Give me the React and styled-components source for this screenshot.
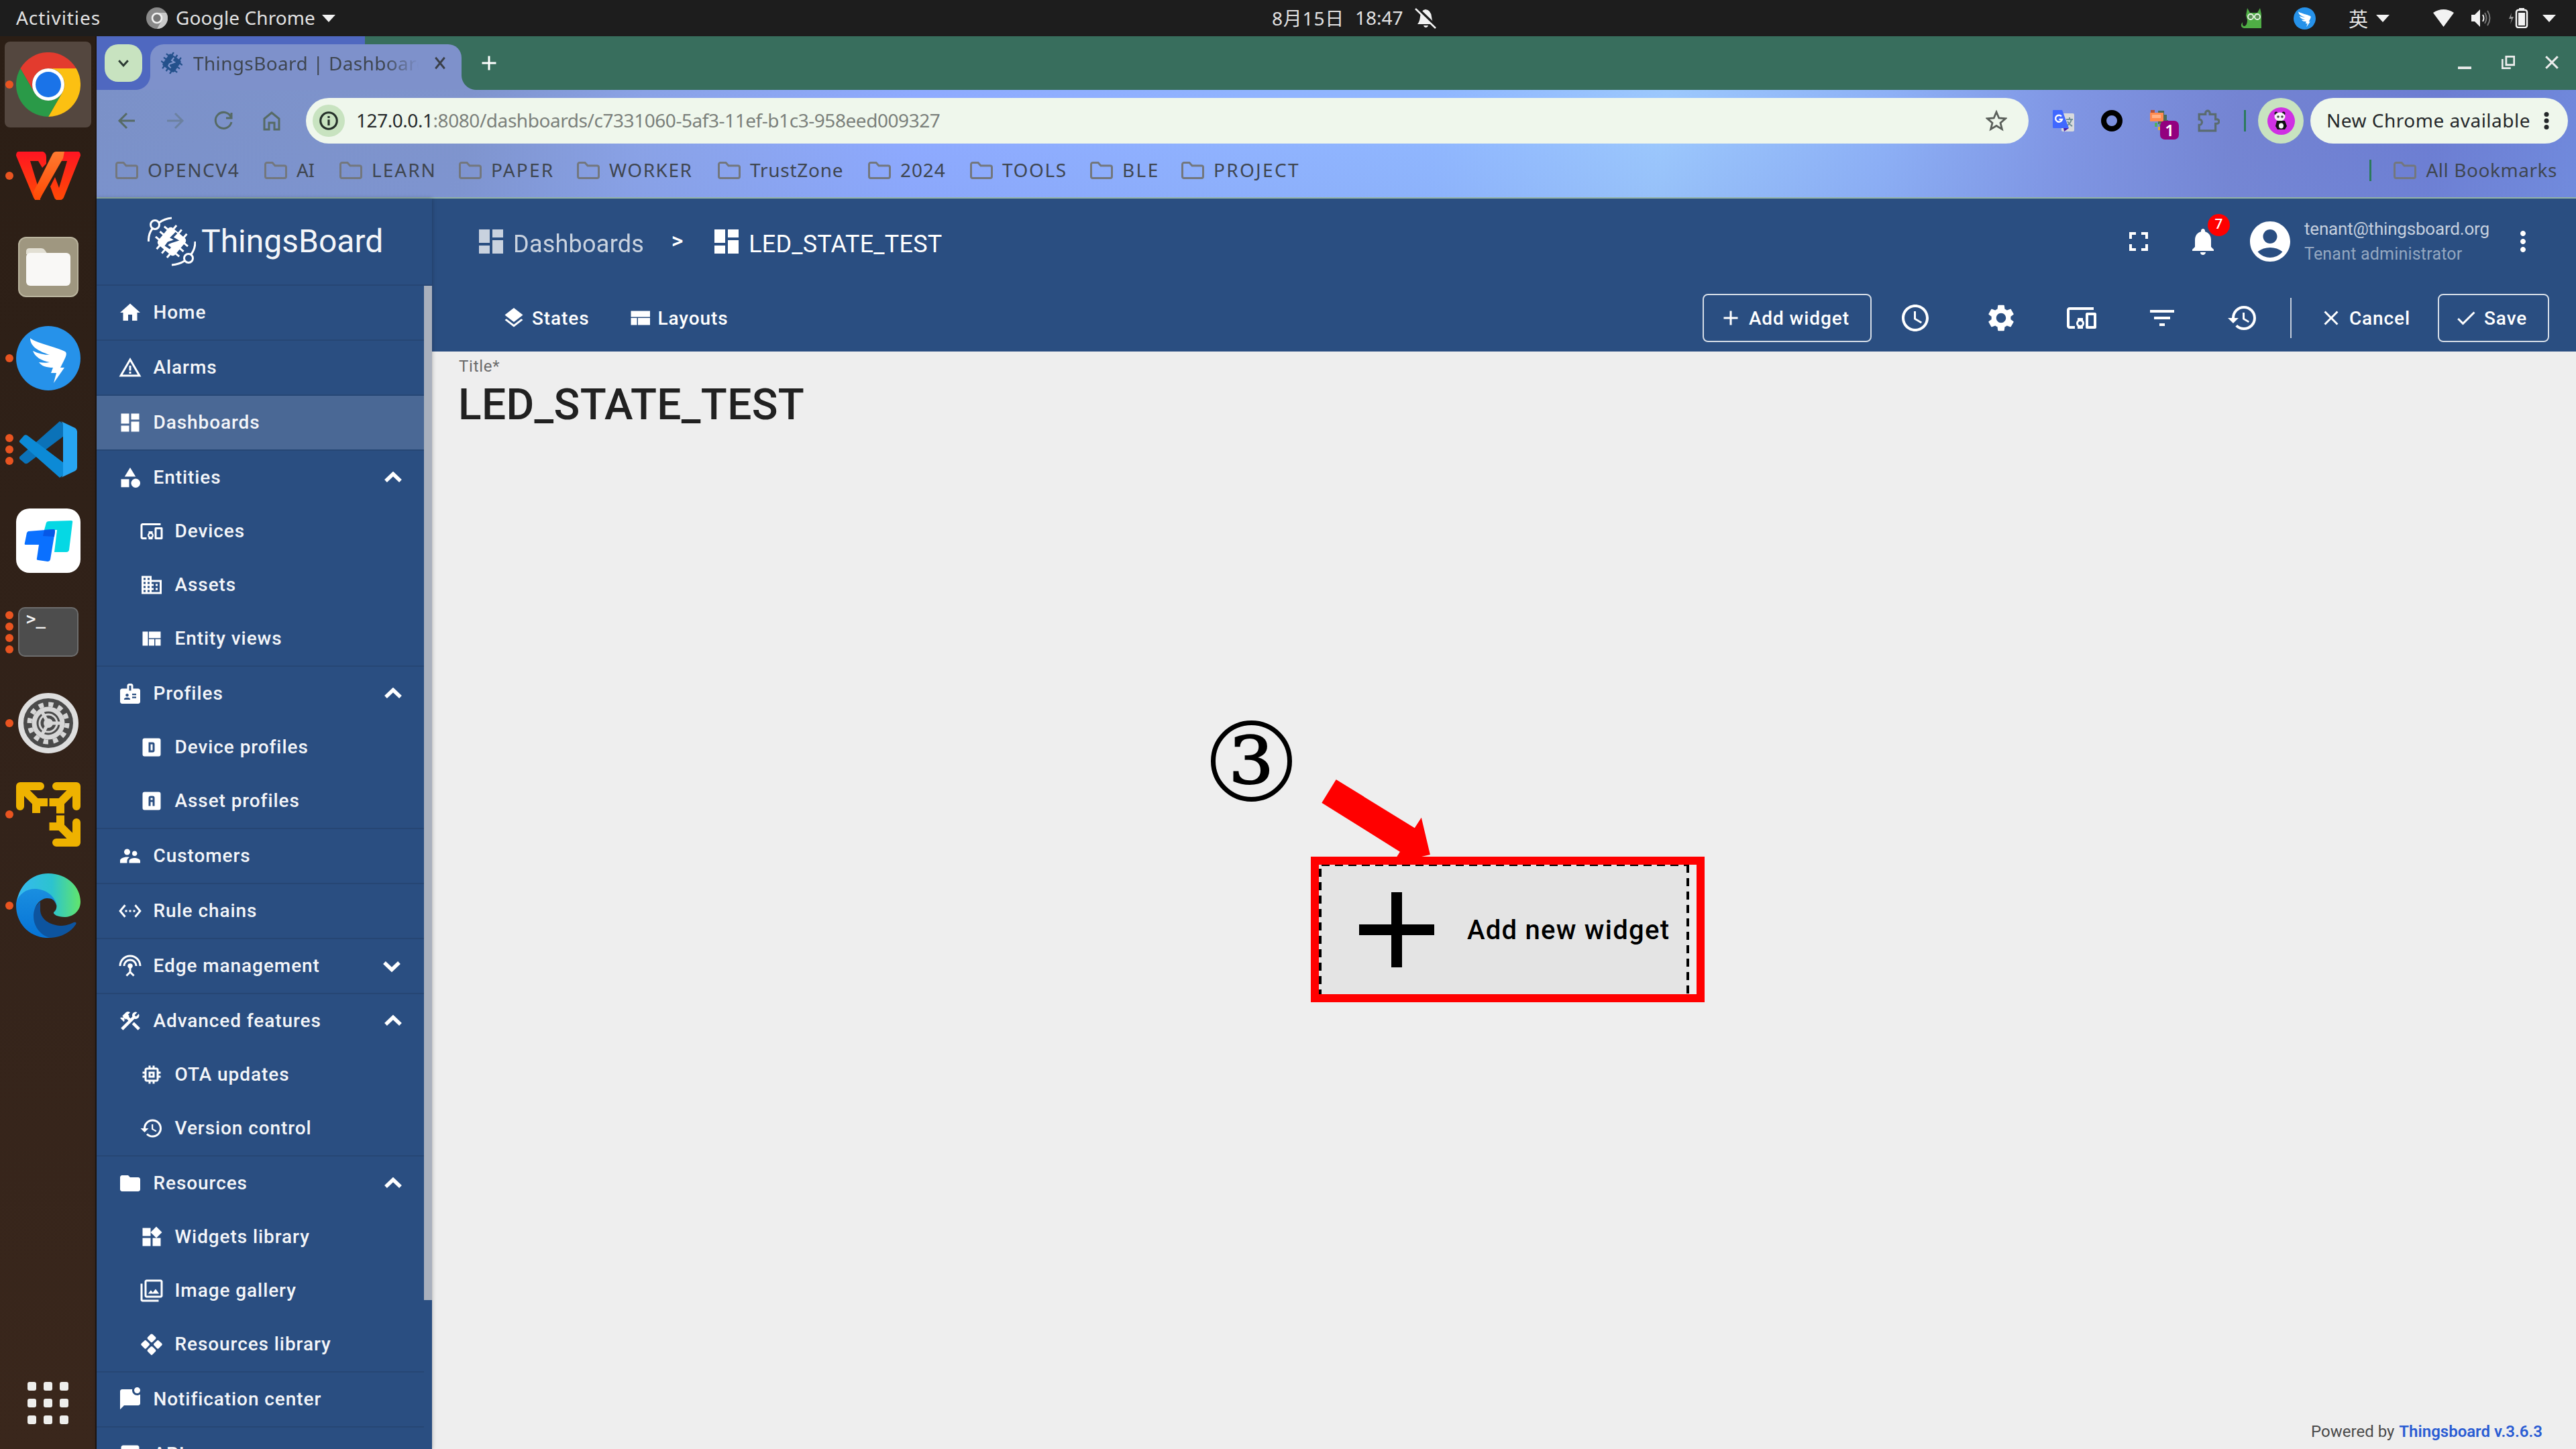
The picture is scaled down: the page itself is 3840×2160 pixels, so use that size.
import React from "react";
import styled, { createGlobalStyle, css } from "styled-components";
import {
  MdHome, MdWarningAmber, MdDashboard, MdCategory, MdDevicesOther, MdDomain, MdBadge,
  MdSupervisorAccount, MdSettingsEthernet, MdSettingsInputAntenna, MdConstruction, MdMemory,
  MdHistory, MdFolder, MdWidgets, MdFilter, MdInsertChart, MdLayers, MdFullscreen,
  MdNotifications, MdAccountCircle, MdMoreVert, MdSchedule, MdSettings, MdFilterList,
  MdAdd, MdClose, MdCheck,
} from "react-icons/md";

const UI = "'Noto Sans', 'Noto Sans CJK SC', sans-serif";
const APP = "Roboto, 'Liberation Sans', sans-serif";
const BLUE = "#2a4e81";
const MINT = "#eff7ec";
const MINT_DARK = "#c8e3c0";

const Global = createGlobalStyle`
  * { box-sizing: border-box; }
  body { margin: 0; background: #1d1d1d; overflow: hidden; }
  svg { display: block; flex: none; }
`;

/* ---------- desktop ---------- */

const Screen = styled.div`
  position: relative;
  width: 3840px;
  height: 2160px;
  overflow: hidden;
  display: flex;
  flex-direction: column;
  font-family: ${UI};
  font-size: 28px;
`;

const Label = styled.span`
  flex: none;
  width: ${(p) => (p.$w ? `${p.$w}px` : "auto")};
  padding-bottom: 2px;
  letter-spacing: ${(p) => p.$ls || 0}px;
  white-space: nowrap;
`;

const TopBar = styled.header`
  height: 54px;
  flex: none;
  display: grid;
  grid-template-columns: 1896px 1fr auto;
  align-items: center;
  background: #1d1d1d;
  color: #e2e2e2;
`;

const TopLeft = styled.div`
  display: flex;
  align-items: center;
  padding-left: 24px;
`;

const AppMenu = styled.div`
  display: flex;
  align-items: center;
  margin-left: 69px;
  gap: 12px;
`;

const Clock = styled.div`
  display: flex;
  align-items: center;
  gap: 20px;
`;

const Tray = styled.div`
  display: flex;
  align-items: center;
  padding-right: 30px;
`;

const TrayItem = styled.div`
  display: flex;
  align-items: center;
  gap: 12px;
  font-size: 29px;
  margin-right: ${(p) => p.$gap || 0}px;
`;

const Caret = styled.i`
  border: 10px solid transparent;
  border-top: 11px solid #f2f2f2;
  border-bottom: 0;
`;

const Workspace = styled.div`
  flex: 1;
  min-height: 0;
  display: flex;
`;

const Dock = styled.nav`
  width: 144px;
  flex: none;
  display: flex;
  flex-direction: column;
  justify-content: space-between;
  padding-top: 4px;
  background: linear-gradient(180deg, #2b1e15, #33231a 55%, #3a271c);
  border-right: 2px solid #1f1712;
`;

const DockList = styled.div`
  display: flex;
  flex-direction: column;
`;

const DockSlot = styled.div`
  position: relative;
  height: 136px;
  display: flex;
  align-items: center;
  justify-content: center;
  padding-left: 2px;
  ${(p) => p.$active && css`
    &::before {
      content: "";
      position: absolute;
      inset: 4px 6px 4px 7px;
      border-radius: 8px;
      background: #54473f;
    }
  `}
  svg { position: relative; }
`;

const Dots = styled.div`
  position: absolute;
  left: 8px;
  top: 0;
  bottom: 0;
  display: flex;
  flex-direction: column;
  justify-content: center;
  gap: 5px;
`;

const Dot = styled.i`
  width: 12px;
  height: 12px;
  border-radius: 50%;
  background: #e95420;
`;

const AppGrid = styled.div`
  display: grid;
  grid-template-columns: repeat(3, 13px);
  gap: 12px 11px;
  padding: 0 0 37px 41px;
`;

const GridDot = styled.i`
  height: 13px;
  border-radius: 3px;
  background: #eeeeec;
`;

/* ---------- browser ---------- */

const Browser = styled.section`
  flex: 1;
  min-width: 0;
  display: flex;
  flex-direction: column;
`;

const TabStrip = styled.div`
  height: 80px;
  flex: none;
  display: flex;
  padding: 12px 26px 0 12px;
  background: linear-gradient(90deg, #4f68c0 400px, #386e5d 400px);
  color: #ffffff;
`;

const TabSearch = styled.div`
  width: 56px;
  height: 56px;
  border-radius: 20px;
  background: ${MINT_DARK};
  display: flex;
  align-items: center;
  justify-content: center;
`;

const Tab = styled.div`
  position: relative;
  width: 464px;
  height: 68px;
  margin-left: 12px;
  padding: 0 20px 12px 16px;
  display: flex;
  align-items: center;
  gap: 16px;
  border-radius: 20px 20px 0 0;
  background: #7e91cb;
  color: #3f4650;
  &::before, &::after {
    content: "";
    position: absolute;
    bottom: 0;
    width: 22px;
    height: 22px;
  }
  &::before {
    left: -22px;
    background: radial-gradient(circle at 0 0, transparent 21.5px, #7e91cb 22.5px);
  }
  &::after {
    right: -22px;
    background: radial-gradient(circle at 100% 0, transparent 21.5px, #7e91cb 22.5px);
  }
`;

const TabTitle = styled.span`
  flex: 1;
  overflow: hidden;
  padding-bottom: 1px;
  white-space: nowrap;
  letter-spacing: 0.35px;
  mask-image: linear-gradient(90deg, #000 84%, transparent 99%);
`;

const NewTab = styled.div`
  margin: 16px 0 0 29px;
`;

const WindowButtons = styled.div`
  display: flex;
  gap: 45px;
  margin: 17px 0 0 auto;
`;

const Chrome = styled.div`
  height: 160px;
  flex: none;
  color: #3f4650;
  background:
    linear-gradient(180deg, rgba(120, 140, 220, 0) 40%, rgba(120, 150, 225, 0.14)),
    linear-gradient(97deg, #7b91c8 0, #7f94cd 15%, #8aa2e6 22%, #8eaaff 33%, #90b3ff 46%, #90b7ff 54%, #9cc8fd 63%, #8db0f6 72%, #8096e4 79%, #7484d2 86%, #6c7dd2 94%, #7089dc 100%);
`;

const Toolbar = styled.div`
  height: 92px;
  display: flex;
  align-items: center;
  padding-left: 9px;
`;

const NavSlot = styled.div`
  width: 72px;
  height: 68px;
  position: relative;
  display: flex;
  align-items: center;
  justify-content: center;
  opacity: ${(p) => (p.$dim ? 0.4 : 1)};
`;

const Omnibox = styled.div`
  width: 2568px;
  height: 68px;
  margin: 0 16px 0 15px;
  padding: 0 32px 0 10px;
  display: flex;
  align-items: center;
  justify-content: space-between;
  border-radius: 34px;
  background: ${MINT};
`;

const Address = styled.div`
  display: flex;
  align-items: center;
  gap: 17px;
`;

const SiteInfo = styled.div`
  width: 48px;
  height: 48px;
  border-radius: 50%;
  background: ${MINT_DARK};
  display: flex;
  align-items: center;
  justify-content: center;
`;

const Url = styled.span`
  padding-bottom: 2px;
  color: #7b807b;
  letter-spacing: -0.45px;
  white-space: nowrap;
`;

const Host = styled.span`
  color: #25282a;
`;

const CountBadge = styled.span`
  position: absolute;
  left: 36px;
  top: 34px;
  width: 28px;
  height: 28px;
  border-radius: 7px;
  background: #93007f;
  color: #fff;
  font-size: 24px;
  font-weight: 600;
  line-height: 28px;
  text-align: center;
`;

const GreenRule = styled.i`
  width: 3px;
  height: 32px;
  background: #2b7a5c;
  margin-left: ${(p) => p.$l || 0}px;
  margin-right: ${(p) => p.$r || 0}px;
`;

const Profile = styled.div`
  width: 68px;
  height: 68px;
  border-radius: 50%;
  background: ${MINT_DARK};
  display: flex;
  align-items: center;
  justify-content: center;
`;

const UpdateChip = styled.div`
  width: 384px;
  height: 68px;
  margin-left: 10px;
  padding: 0 28px 0 24px;
  display: flex;
  align-items: center;
  justify-content: space-between;
  border-radius: 34px;
  background: ${MINT};
  color: #25282a;
`;

const BookmarkBar = styled.div`
  height: 56px;
  display: flex;
  align-items: center;
  padding: 0 28px;
`;

const Bookmark = styled.div`
  width: ${(p) => (p.$w ? `${p.$w}px` : "auto")};
  display: flex;
  align-items: center;
  gap: 14px;
`;

const OtherBookmarks = styled.div`
  display: flex;
  align-items: center;
  margin-left: auto;
`;

const ChromeRule = styled.div`
  height: 2px;
  flex: none;
  background: #93b3a6;
`;

/* ---------- ThingsBoard ---------- */

const Page = styled.div`
  flex: 1;
  min-height: 0;
  display: flex;
  font-family: ${APP};
  background: #eeeeee;
`;

const Sidebar = styled.aside`
  width: 500px;
  flex: none;
  display: flex;
  flex-direction: column;
  background: ${BLUE};
  color: #f4f6f9;
  box-shadow: 0 0 6px rgba(0, 0, 0, 0.3);
  z-index: 1;
`;

const Brand = styled.div`
  height: 130px;
  flex: none;
  padding: 0 0 1px 76px;
  display: flex;
  align-items: center;
  gap: 8px;
  border-bottom: 2px solid #264674;
  font-size: 48px;
`;

const MenuScroll = styled.div`
  flex: 1;
  min-height: 0;
  display: flex;
  overflow: hidden;
`;

const Menu = styled.div`
  width: 488px;
`;

const MenuGroup = styled.div`
  border-bottom: 2px solid #264674;
`;

const MenuRow = styled.div`
  height: 80px;
  padding: 0 33px 0 ${(p) => (p.$sub ? 64 : 32)}px;
  display: flex;
  align-items: center;
  gap: 16.5px;
  font-size: 28px;
  font-weight: 500;
  letter-spacing: 0.92px;
  white-space: nowrap;
  background: ${(p) => (p.$active ? "#4a6895" : "transparent")};
  svg { color: #fff; }
`;

const MenuText = styled.span`
  padding-bottom: 2px;
`;

const Toggle = styled.div`
  margin-left: auto;
  padding-right: ${(p) => (p.$open ? 0 : 2)}px;
  margin-right: -1px;
`;

const ScrollThumb = styled.div`
  width: 12px;
  height: 1512px;
  background: #a9b0bd;
`;

const Main = styled.main`
  flex: 1;
  min-width: 0;
  display: flex;
  flex-direction: column;
`;

const Header = styled.div`
  height: 128px;
  flex: none;
  display: flex;
  align-items: center;
  padding: 0 55px 0 64px;
  background: ${BLUE};
  color: #fff;
`;

const Crumb = styled.div`
  display: flex;
  align-items: center;
  gap: 9px;
  opacity: ${(p) => (p.$parent ? 0.75 : 1)};
  font-size: 36px;
  letter-spacing: ${(p) => (p.$parent ? 0.25 : 0.2)}px;
`;

const CrumbText = styled.span`
  padding-top: 7px;
`;

const CrumbSeparator = styled.span`
  width: 99px;
  text-align: center;
  font-size: 34px;
  font-weight: 500;
  line-height: 40px;
  padding-bottom: 4px;
`;

const HeaderActions = styled.div`
  margin-left: auto;
  display: flex;
  align-items: center;
`;

const HeaderIcon = styled.div`
  position: relative;
  width: 96px;
  display: flex;
  justify-content: center;
`;

const AlertBadge = styled.span`
  position: absolute;
  left: 55px;
  top: -17px;
  width: 33px;
  height: 33px;
  border-radius: 50%;
  background: #ff0000;
  font-size: 21px;
  font-weight: 500;
  line-height: 31px;
  text-align: center;
`;

const Account = styled.div`
  display: flex;
  align-items: center;
  gap: 15px;
  margin: 0 24px 0 16px;
`;

const AccountText = styled.div`
  width: 278px;
  line-height: 38px;
  white-space: nowrap;
`;

const UserEmail = styled.div`
  font-size: 26px;
  letter-spacing: -0.2px;
  color: #c5cfde;
`;

const UserRole = styled.div`
  font-size: 25px;
  letter-spacing: 0.2px;
  color: #94a7c0;
`;

const DashBar = styled.div`
  height: 100px;
  flex: none;
  display: flex;
  align-items: center;
  padding: 0 40px 0 104px;
  background: ${BLUE};
  color: #fff;
  font-size: 28px;
  font-weight: 500;
  letter-spacing: 0.9px;
`;

const TextButton = styled.div`
  display: flex;
  align-items: center;
  gap: 9px;
  margin-left: ${(p) => p.$l || 0}px;
  white-space: nowrap;
`;

const OutlineButton = styled(TextButton)`
  width: ${(p) => p.$w}px;
  height: 72px;
  padding-left: 22px;
  border: 2px solid #d4dce6;
  border-radius: 8px;
`;

const BarActions = styled.div`
  margin-left: auto;
  display: flex;
  align-items: center;
`;

const IconTools = styled.div`
  display: flex;
  gap: 72px;
  margin: 0 47px 0 41px;
  svg:first-child { margin-right: 8px; }
`;

const WhiteRule = styled.i`
  width: 2px;
  height: 60px;
  background: #c3cddb;
`;

const TitleBlock = styled.div`
  height: 124px;
  flex: none;
  padding: 8px 0 0 39px;
`;

const TitleHint = styled.div`
  font-size: 24px;
  line-height: 28px;
  letter-spacing: 0.75px;
  padding-left: 1px;
  color: #6b6b6b;
`;

const Title = styled.div`
  margin-top: 6px;
  font-size: 64px;
  line-height: 76px;
  font-weight: 500;
  letter-spacing: 0.35px;
  color: #212121;
`;

const Board = styled.div`
  flex: 1;
  display: flex;
  align-items: center;
  justify-content: center;
`;

const dashX = "repeating-linear-gradient(90deg, #000 0 12px, transparent 12px 20px)";
const dashY = "repeating-linear-gradient(180deg, #000 0 12px, transparent 12px 20px)";

const AddWidgetCard = styled.div`
  width: 552px;
  height: 199px;
  padding-left: 20px;
  display: flex;
  align-items: center;
  gap: 9px;
  font-size: 40px;
  font-weight: 500;
  letter-spacing: 1.25px;
  color: #000;
  background:
    ${dashX} 4px 0 / 100% 4px no-repeat,
    ${dashX} 4px 100% / 100% 4px no-repeat,
    ${dashY} 0 8px / 4px 100% no-repeat,
    ${dashY} 100% 2px / 4px 100% no-repeat,
    #e4e4e4;
  white-space: nowrap;
`;

const Footer = styled.footer`
  height: 36px;
  flex: none;
  padding-right: 50px;
  display: flex;
  justify-content: flex-end;
  gap: 7px;
  font-size: 24px;
  line-height: 20px;
  color: #4a4a4a;
`;

const VersionLink = styled.span`
  font-weight: 600;
  color: #2a5cd3;
`;

/* ---------- notes drawn over the page ---------- */

const StepNumber = styled.div`
  position: absolute;
  left: 1805px;
  top: 1074px;
  width: 121px;
  height: 121px;
  border: 7px solid #000;
  border-radius: 50%;
  color: #000;
  font-family: "DejaVu Serif", serif;
  font-size: 98px;
  line-height: 106px;
  text-align: center;
  -webkit-text-stroke: 2px #000;
`;

const Digit = styled.span`
  display: inline-block;
  transform: scaleX(1.08);
`;

const Arrow = styled.svg`
  position: absolute;
  left: 1960px;
  top: 1150px;
`;

const Highlight = styled.div`
  position: absolute;
  left: 1954px;
  top: 1277px;
  width: 587px;
  height: 217px;
  border: 12px solid #ff0000;
`;

/* ---------- glyphs ---------- */

const MdiIcon = ({ d, size = 36 }) => (
  <svg width={size} height={size} viewBox="0 0 24 24" fill="currentColor"><path fillRule="evenodd" d={d} /></svg>
);
const viewQuilt = "M3 5h5.33v14H3zM9.33 5H21v6.5H9.33zM9.33 12.5h5.34V19H9.33zM15.67 12.5H21V19h-5.33z";
const viewCompact = "M3 19h6v-7H3v7zm7 0h12v-7H10v7zM3 5v6h19V5H3z";
const boxD = "M9 7h4a2 2 0 0 1 2 2v6a2 2 0 0 1-2 2H9V7m2 2v6h2V9h-2M5 3h14a2 2 0 0 1 2 2v14a2 2 0 0 1-2 2H5a2 2 0 0 1-2-2V5a2 2 0 0 1 2-2z";
const boxA = "M11 7a2 2 0 0 0-2 2v8h2v-4h2v4h2V9a2 2 0 0 0-2-2h-2m0 2h2v2h-2V9M5 3h14a2 2 0 0 1 2 2v14a2 2 0 0 1-2 2H5a2 2 0 0 1-2-2V5a2 2 0 0 1 2-2z";
const rhombusSplit = "M12 1.6a1.4 1.4 0 0 0-1 .4L8 5a1.3 1.3 0 0 0 0 1.6l3.1 3.1a1.3 1.3 0 0 0 1.8 0L16 6.600a1.3 1.3 0 0 0 0-1.700L13 2a1.400 1.400 0 0 0-1-.4zM5.800 7.900a1.300 1.300 0 0 0-.9.4L1.800 11.200a1.300 1.300 0 0 0 0 1.700L4.900 16a1.300 1.300 0 0 0 1.800 0l3-3.100a1.300 1.300 0 0 0 0-1.700l-3-2.900a1.300 1.300 0 0 0-.9-.4zM18.200 7.900a1.300 1.300 0 0 0-.9.4l-3 2.900a1.300 1.300 0 0 0 0 1.700l3 3.100a1.300 1.300 0 0 0 1.800 0l3.100-3.100a1.300 1.300 0 0 0 0-1.700l-3.100-2.900a1.300 1.300 0 0 0-.9-.4zM12 14a1.300 1.300 0 0 0-.9.4L8 17.400A1.300 1.300 0 0 0 8 19l3 3a1.300 1.300 0 0 0 2 0l3-3a1.300 1.300 0 0 0 0-1.600l-3.100-3A1.300 1.300 0 0 0 12 14z";
const chatUnread = "M22 6.980V16c0 1.100-.9 2-2 2H6l-4 4V4c0-1.100.9-2 2-2h10.100c-.06.320-.1.660-.1 1 0 2.760 2.240 5 5 5 1.130 0 2.160-.39 3-1.020zM16 3a3 3 0 1 0 6 0 3 3 0 0 0-6 0z";

const Chevron = ({ open }) => (
  <svg width="28" height="18" viewBox="0 0 28 18" fill="none" stroke="currentColor" strokeWidth="5.5">
    <path d={open ? "M3 14 L14 3.500 L25 14" : "M3 4 L14 14.500 L25 4"} />
  </svg>
);

const ThingsLogo = () => (
  <svg width="72" height="74" viewBox="0 0 72 74" fill="none" stroke="#fff" strokeWidth="3">
    <circle cx="11" cy="12" r="6.500" />
    <circle cx="61" cy="62" r="6.500" />
    <path d="M17 9 Q25 3 36 2 M7 18 Q1 26 1.500 37 M55 66 Q47 71 36 72 M65 56 Q71 48 71 37" />
    <g transform="translate(36 37) rotate(40)">
      <rect x="-16.500" y="-16.500" width="33" height="33" rx="5" fill="#fff" stroke="none" />
      <path d="M-10 -23 V23 M0 -23 V23 M10 -23 V23 M-23 -10 H23 M-23 0 H23 M-23 10 H23" />
    </g>
    <path d="M43 24 L36 31 L43 35 L31 39 L28 43 L34 47" stroke={BLUE} strokeWidth="3.500" />
  </svg>
);

const Favicon = () => (
  <svg width="32" height="34" viewBox="0 0 48 50" fill="none" stroke="#24518c" strokeWidth="3.500">
    <g transform="translate(24 25) rotate(35)">
      <rect x="-16" y="-16" width="32" height="32" rx="5" fill="#24518c" stroke="none" />
      <path d="M-10 -22 V22 M0 -22 V22 M10 -22 V22 M-22 -10 H22 M-22 0 H22 M-22 10 H22" />
    </g>
    <path d="M29 13 L24 19 L30 23 L19 27 L17 31 L22 36" stroke="#8297cd" strokeWidth="3" />
  </svg>
);

const FolderOutline = () => (
  <svg width="34" height="26" viewBox="0 0 34 26" fill="none" stroke="#73777d" strokeWidth="3">
    <path d="M4 1.500 H12 L16 6 H30 A2.500 2.500 0 0 1 32.500 8.500 V22 A2.500 2.500 0 0 1 30 24.500 H4 A2.500 2.500 0 0 1 1.500 22 V4 A2.500 2.500 0 0 1 4 1.500Z" />
  </svg>
);

const Line = ({ size = 32, d, color = "#566a64", sw = 3, fill = "none" }) => (
  <svg width={size} height={size} viewBox="0 0 32 32" fill={fill} stroke={color} strokeWidth={sw}><path d={d} /></svg>
);

const ChromeLogo = ({ size = 96 }) => (
  <svg width={size} height={size} viewBox="0 0 96 96">
    <path fill="#e33b2e" d="M48 24H89.600A48 48 0 0 0 6.400 24L27.200 60A24 24 0 0 1 48 24Z" />
    <path fill="#fcc012" d="M89.600 24A48 48 0 0 1 48 96L68.800 60A24 24 0 0 0 48 24Z" />
    <path fill="#2a9a48" d="M6.400 24A48 48 0 0 0 48 96L68.800 60A24 24 0 0 1 27.200 60Z" />
    <circle cx="48" cy="48" r="24" fill="#fff" />
    <circle cx="48" cy="48" r="19" fill="#1a73e8" />
  </svg>
);

const ChromeMono = () => (
  <svg width="32" height="32" viewBox="0 0 96 96">
    <circle cx="48" cy="48" r="48" fill="#8a8a8a" />
    <path fill="#c9c9c9" d="M89.600 24A48 48 0 0 1 48 96L68.800 60A24 24 0 0 0 48 24Z" />
    <circle cx="48" cy="48" r="25" fill="#f2f2f2" />
    <circle cx="48" cy="48" r="17" fill="#777" />
  </svg>
);

const WpsLogo = () => (
  <svg width="96" height="72" viewBox="0 0 96 72" fill="none" strokeLinejoin="round">
    <defs>
      <linearGradient id="wps" x1="0" y1="0" x2="0" y2="1"><stop offset="0" stopColor="#ff1522" /><stop offset="1" stopColor="#ff4a05" /></linearGradient>
      <linearGradient id="wpsMid" x1="0" y1="0" x2="0" y2="1"><stop offset="0" stopColor="#ff7a30" /><stop offset="1" stopColor="#ff4a05" /></linearGradient>
    </defs>
    <path fill="url(#wps)" d="M3 0H40Q45 2 45 8L45 18L39 24L33 14H21L35 60L36 72H30Q27 72 25 66L0 6Q0 1 3 0Z" />
    <path fill="url(#wps)" d="M66 0H93Q96 1 96 6L72 66Q70 72 66 72H60Q57 70 56 66L51 52L58 38L64 54L76 14H66Z" />
    <path fill="url(#wpsMid)" d="M54 4Q56 0 60 0H72L70 10L38 66Q36 72 32 72H28L26 60Z" />
  </svg>
);

const FilesLogo = () => (
  <svg width="90" height="90" viewBox="0 0 90 90">
    <rect x="1" y="1" width="88" height="88" rx="11" fill="#9f9780" stroke="#b9b39d" strokeWidth="2" />
    <path fill="#e2dfd3" d="M12 22Q12 17 17 17H34Q38 17 40 20L44 26H12Z" />
    <rect x="12" y="24" width="66" height="49" rx="6" fill="#f9f8f6" />
  </svg>
);

const DingLogo = ({ size = 96 }) => (
  <svg width={size} height={size} viewBox="0 0 96 96">
    <circle cx="48" cy="48" r="48" fill="#2692ea" />
    <path fill="#fff" d="M21 18C28 25 60 31 73 38C76 40 75 44 72 50L66 62H72L56 85L60 70H52L55 62C46 62 38 60 34 54C40 55 46 55 50 54C38 52 28 46 25 37C33 41 42 43 50 43C36 38 21 32 21 18Z" />
  </svg>
);

const CodeLogo = () => (
  <svg width="86" height="84" viewBox="0 0 86 84">
    <path fill="#0b72b8" d="M60 0L66 4V22L13 62Q9 65 6 61L0 56V53Z" />
    <path fill="#0c8ad6" d="M0 29L7 21Q10 19 13 22L66 62V80L60 84L0 31Z" />
    <path fill="#27a5f2" d="M62 0L83 10Q86 12 86 15V69Q86 72 83 74L62 84Q65 82 65 78V6Q65 2 62 0Z" />
  </svg>
);

const DeskLogo = () => (
  <svg width="96" height="96" viewBox="0 0 96 96">
    <rect width="96" height="96" rx="20" fill="#fff" />
    <path fill="#05d8e4" d="M45 21Q46 19 49 19L82 18Q85 18 84 21L79 62Q78 65 75 65H57L61 32H42Z" />
    <path fill="#0a70ff" d="M18 34L56 31Q58 31 58 34L51 76Q50 79 47 79L33 77Q30 77 31 74L34 54H14Q12 54 13 51L16 36Z" />
    <path fill="#0757e6" d="M42 32L56 31Q58 31 58 34L57 42L40 41Z" />
  </svg>
);

const TermText = styled.text`
  font: 700 24px "DejaVu Sans Mono", monospace;
  fill: #f1f1f1;
`;

const TerminalLogo = () => (
  <svg width="90" height="74" viewBox="0 0 90 74">
    <rect x="1" y="1" width="88" height="72" rx="9" fill="#4d4d4d" stroke="#6d6d6d" strokeWidth="2" />
    <TermText x="12" y="26">&gt;_</TermText>
  </svg>
);

const GearLogo = () => (
  <svg width="90" height="90" viewBox="-45 -45 90 90" fill="none">
    <circle r="41" fill="#4a4a4a" stroke="#dedede" strokeWidth="8" />
    <circle r="21" stroke="#d6d6d6" strokeWidth="7" />
    <circle r="28" stroke="#d6d6d6" strokeWidth="7" strokeDasharray="7.300 7.360" />
    <circle r="7" fill="#d6d6d6" />
    <path d="M0 0 L20 0 M0 0 L-10 -18 M0 0 L-10 18" stroke="#d6d6d6" strokeWidth="5" />
    <circle r="13" stroke="#d6d6d6" strokeWidth="3" />
  </svg>
);

const VmLogo = () => (
  <svg width="96" height="96" viewBox="0 0 96 96" fill="none" stroke="#eeb200" strokeWidth="12">
    <path strokeLinecap="round" strokeLinejoin="round" d="M6 36V6H36M60 6H90V36M90 60V90H60" />
    <path d="M6 6L30 30M90 6L66 30M90 90L66 66" />
    <path d="M30 46V30H47M49.500 30H66V46.500M66 49.500V66H49.500" />
  </svg>
);

const EdgeLogo = () => (
  <svg width="96" height="96" viewBox="0 0 96 96">
    <defs>
      <linearGradient id="edgeTop"><stop offset="0" stopColor="#35b9f1" /><stop offset="0.550" stopColor="#2cc3cf" /><stop offset="1" stopColor="#62e56b" /></linearGradient>
      <linearGradient id="edgeSide" x1="0" y1="0" x2="0" y2="1"><stop offset="0" stopColor="#1a8fe0" /><stop offset="1" stopColor="#0673d6" /></linearGradient>
    </defs>
    <path fill="#0d549f" d="M36 42C29 48 24 56 24 66C24 82 36 96 52 96C68 95 82 87 89 76C91 73 88 72 86 73C78 77 72 78 66 78C50 77 36 68 36 54Z" />
    <path fill="url(#edgeSide)" d="M0 48C0 30 14 20 30 22C48 23 60 36 60 48C58 40 54 37 46 37C34 38 26 50 26 64C26 80 38 94 52 96C22 98 0 76 0 48Z" />
    <path fill="url(#edgeTop)" d="M1 42C5 17 24 0 48 0C76 0 96 20 96 42C96 57 84 65 72 65C62 65 55 61 56 58C60 55 61 50 60 46C57 32 42 23 28 23C15 23 4 31 1 42Z" />
  </svg>
);

const CatIcon = () => (
  <svg width="33" height="32" viewBox="0 0 33 32">
    <path fill="#4fae45" d="M10 1L14 8H25L29 1L31 10V31H5Q0 30 1 25L3 22Q2 28 6 28Q10 26 10 19L8 12Z" />
    <circle cx="15" cy="14" r="4" fill="#5c8f56" stroke="#e8f5e6" strokeWidth="1.800" />
    <circle cx="25" cy="14" r="4" fill="#5c8f56" stroke="#e8f5e6" strokeWidth="1.800" />
  </svg>
);

const BellOff = () => (
  <svg width="34" height="32" viewBox="0 0 34 32">
    <path fill="#f2f2f2" d="M4 25Q7 22 8 14Q9 4 16 3Q24 4 25 14Q26 22 29 25ZM13 27H20Q19 30 16.500 30Q14 30 13 27Z" />
    <path d="M3 1L33 30" stroke="#1d1d1d" strokeWidth="5" />
    <path d="M1 2L31 31" stroke="#f2f2f2" strokeWidth="2.500" />
  </svg>
);

const Wifi = () => (
  <svg width="31" height="26" viewBox="0 0 31 26"><path fill="#f2f2f2" d="M0 5Q15.500 -5 31 5L15.500 26Z" /></svg>
);

const Speaker = () => (
  <svg width="30" height="28" viewBox="0 0 30 28">
    <path fill="#f2f2f2" d="M0 9H5L13 1V27L5 19H0Z" />
    <path d="M17 9Q20 14 17 19" stroke="#f2f2f2" strokeWidth="2" fill="none" />
    <path d="M20 6Q25 14 20 22M24 3Q31 14 24 25" stroke="#777" strokeWidth="2" fill="none" />
  </svg>
);

const Battery = () => (
  <svg width="30" height="30" viewBox="0 0 30 30">
    <path d="M5 7L1 16H5L3 24L8 13H4Z" fill="#999" />
    <rect x="12" y="3" width="16" height="26" rx="3" fill="none" stroke="#f2f2f2" strokeWidth="2.500" />
    <rect x="16" y="0" width="8" height="3" fill="#f2f2f2" />
    <rect x="15" y="7" width="10" height="19" fill="#f2f2f2" />
  </svg>
);

const TranslateIcon = () => (
  <svg width="34" height="34" viewBox="0 0 34 34" fill="none">
    <rect x="14" y="6" width="19" height="27" rx="2" fill="#d8dadd" />
    <path d="M21 15H31M26 12V15M29 15Q27 22 21 25M23 18Q26 23 30 25" stroke="#6f8f96" strokeWidth="2" />
    <path d="M17 28H25L18 33Z" fill="#4a22a8" />
    <path fill="#4068ff" d="M2 1H15L25 28H2Q1 28 1 26V2Q1 1 2 1Z" />
    <path d="M14 10.500A5 5 0 1 0 15 15H10.500" stroke="#fff" strokeWidth="2.400" />
  </svg>
);

const PixelIcon = () => (
  <svg width="34" height="34" viewBox="0 0 34 34">
    <path fill="#4c6b58" d="M14 2H23V8H27V16H29V22H14Z" />
    <path fill="#b5533a" d="M3 1H9V5H3Z" />
    <path fill="#ff8a4f" d="M2 5H22V18H2Z" />
    <path fill="#ffb287" d="M5 8H18V13H5Z" />
    <path fill="#4fb063" d="M9 20H13V26H9ZM16 20H20V25H16Z" />
    <path fill="#e6b030" d="M14 26H18V31H14Z" />
  </svg>
);

const Panda = () => (
  <svg width="41" height="41" viewBox="0 0 41 41">
    <circle cx="20.500" cy="20.500" r="20.500" fill="#cf30e3" />
    <circle cx="13" cy="9" r="2.500" fill="#111" /><circle cx="24" cy="9" r="2.500" fill="#111" />
    <ellipse cx="18.500" cy="14" rx="8" ry="6.500" fill="#f6f6f6" />
    <circle cx="16" cy="14" r="1.800" fill="#444" /><circle cx="22" cy="14" r="1.800" fill="#444" />
    <path fill="#111" d="M14 20H26L29 28L26 33H15L12 28Z" />
    <ellipse cx="20.500" cy="27.500" rx="3.500" ry="4" fill="#f6f6f6" />
  </svg>
);

/* ---------- data ---------- */

const dock = [
  { icon: <ChromeLogo />, dots: 1, active: true },
  { icon: <WpsLogo />, dots: 1 },
  { icon: <FilesLogo />, dots: 0 },
  { icon: <DingLogo />, dots: 1 },
  { icon: <CodeLogo />, dots: 3 },
  { icon: <DeskLogo />, dots: 0 },
  { icon: <TerminalLogo />, dots: 4 },
  { icon: <GearLogo />, dots: 1 },
  { icon: <VmLogo />, dots: 1 },
  { icon: <EdgeLogo />, dots: 1 },
];

const bookmarks = [
  ["OPENCV4", 222, 1.6], ["AI", 112, -0.5], ["LEARN", 178, 2], ["PAPER", 176, 2.2], ["WORKER", 210, 1.5],
  ["TrustZone", 224, 0.75], ["2024", 152, 0.9], ["TOOLS", 179, 1.6], ["BLE", 136, 2.4], ["PROJECT", 190, 2.3],
];

const menu = [
  [{ t: "Home", i: <MdHome size={36} /> }],
  [{ t: "Alarms", i: <MdWarningAmber size={36} /> }],
  [{ t: "Dashboards", i: <MdDashboard size={36} />, active: true }],
  [
    { t: "Entities", i: <MdCategory size={36} />, open: true },
    { t: "Devices", i: <MdDevicesOther size={36} />, sub: true },
    { t: "Assets", i: <MdDomain size={36} />, sub: true },
    { t: "Entity views", i: <MdiIcon d={viewQuilt} />, sub: true },
  ],
  [
    { t: "Profiles", i: <MdBadge size={36} />, open: true },
    { t: "Device profiles", i: <MdiIcon d={boxD} />, sub: true },
    { t: "Asset profiles", i: <MdiIcon d={boxA} />, sub: true },
  ],
  [{ t: "Customers", i: <MdSupervisorAccount size={36} /> }],
  [{ t: "Rule chains", i: <MdSettingsEthernet size={36} /> }],
  [{ t: "Edge management", i: <MdSettingsInputAntenna size={36} />, open: false }],
  [
    { t: "Advanced features", i: <MdConstruction size={36} />, open: true },
    { t: "OTA updates", i: <MdMemory size={36} />, sub: true },
    { t: "Version control", i: <MdHistory size={36} />, sub: true },
  ],
  [
    { t: "Resources", i: <MdFolder size={36} />, open: true },
    { t: "Widgets library", i: <MdWidgets size={36} />, sub: true },
    { t: "Image gallery", i: <MdFilter size={36} />, sub: true },
    { t: "Resources library", i: <MdiIcon d={rhombusSplit} />, sub: true },
  ],
  [{ t: "Notification center", i: <MdiIcon d={chatUnread} /> }],
  [{ t: "API usage", i: <MdInsertChart size={36} /> }],
];

/* ---------- sections ---------- */

const DesktopBar = () => (
  <TopBar>
    <TopLeft>
      <Label $w={125} $ls={0.95}>Activities</Label>
      <AppMenu>
        <ChromeMono />
        <Label $w={206} $ls={0.1}>Google Chrome</Label>
        <Caret />
      </AppMenu>
    </TopLeft>
    <Clock>
      <Label $w={104} $ls={0.8}>8月15日</Label>
      <Label $w={69}>18:47</Label>
      <BellOff />
    </Clock>
    <Tray>
      <TrayItem $gap={46}><CatIcon /></TrayItem>
      <TrayItem $gap={49}><DingLogo size={33} /></TrayItem>
      <TrayItem $gap={65}>英<Caret /></TrayItem>
      <TrayItem $gap={26}><Wifi /></TrayItem>
      <TrayItem $gap={25}><Speaker /></TrayItem>
      <TrayItem $gap={21}><Battery /></TrayItem>
      <Caret />
    </Tray>
  </TopBar>
);

const Launcher = () => (
  <Dock>
    <DockList>
      {dock.map((d, i) => (
        <DockSlot key={i} $active={d.active}>
          {d.icon}
          <Dots>{Array.from({ length: d.dots }, (_, n) => <Dot key={n} />)}</Dots>
        </DockSlot>
      ))}
    </DockList>
    <AppGrid>{Array.from({ length: 9 }, (_, n) => <GridDot key={n} />)}</AppGrid>
  </Dock>
);

const BrowserFrame = () => (
  <>
    <TabStrip>
      <TabSearch><Line size={24} d="M7 11L16 21L25 11" color="#2c3a33" sw={4} /></TabSearch>
      <Tab>
        <Favicon />
        <TabTitle>ThingsBoard | Dashboards</TabTitle>
        <Line size={24} d="M7 5L25 27M25 5L7 27" color="#3a3f48" sw={3.800} />
      </Tab>
      <NewTab><Line size={24} d="M16 2V30M2 16H30" color="#fff" sw={4} /></NewTab>
      <WindowButtons>
        <Line size={20} d="M0 29H32" color="#ececec" sw={6} />
        <Line size={20} d="M11 2H30V22H11ZM2 8V30H22" color="#ececec" sw={4.500} />
        <Line size={20} d="M2 2L30 30M30 2L2 30" color="#ececec" sw={5} />
      </WindowButtons>
    </TabStrip>
    <Chrome>
      <Toolbar>
        <NavSlot><Line d="M28 16H5M16 5L5 16L16 27" /></NavSlot>
        <NavSlot $dim><Line d="M4 16H27M16 5L27 16L16 27" /></NavSlot>
        <NavSlot><Line d="M27 10A12 12 0 1 0 28 18M28 4V12H20" /></NavSlot>
        <NavSlot><Line d="M5 29V13L16 4L27 13V29H20V19H12V29Z" /></NavSlot>
        <Omnibox>
          <Address>
            <SiteInfo>
              <Line size={28} d="M16 2A14 14 0 1 0 16 30A14 14 0 1 0 16 2M16 14V24M16 8V11.500" color="#25302a" sw={3.600} />
            </SiteInfo>
            <Url><Host>127.0.0.1</Host>:8080/dashboards/c7331060-5af3-11ef-b1c3-958eed009327</Url>
          </Address>
          <Line d="M16 3L19.800 12L29.500 12.800L22 19.200L24.400 28.600L16 23.500L7.600 28.600L10 19.200L2.500 12.800L12.200 12Z" color="#5a5f5a" sw={2.800} />
        </Omnibox>
        <NavSlot><TranslateIcon /></NavSlot>
        <NavSlot><Line d="M16 4A12 12 0 1 0 16 28A12 12 0 1 0 16 4" color="#000" sw={8} /></NavSlot>
        <NavSlot><PixelIcon /><CountBadge>1</CountBadge></NavSlot>
        <NavSlot><Line size={34} d="M3 7H12V5A3 3 0 0 1 18 5V7H26V14H28A3 3 0 0 1 28 20H26V30H3V22A4 4 0 0 0 3 14Z" color="#5a6b70" /></NavSlot>
        <GreenRule $l={17} $r={18} />
        <Profile><Panda /></Profile>
        <UpdateChip>
          <Label $ls={0.5}>New Chrome available</Label>
          <svg width="8" height="26" viewBox="0 0 8 26" fill="#25282a"><circle cx="4" cy="3.500" r="3.500" /><circle cx="4" cy="13" r="3.500" /><circle cx="4" cy="22.500" r="3.500" /></svg>
        </UpdateChip>
      </Toolbar>
      <BookmarkBar>
        {bookmarks.map(([name, width, ls]) => (
          <Bookmark key={name} $w={width}><FolderOutline /><Label $ls={ls}>{name}</Label></Bookmark>
        ))}
        <OtherBookmarks>
          <GreenRule $r={33} />
          <Bookmark><FolderOutline /><Label $ls={0.55}>All Bookmarks</Label></Bookmark>
        </OtherBookmarks>
      </BookmarkBar>
    </Chrome>
    <ChromeRule />
  </>
);

const SideMenu = () => (
  <Sidebar>
    <Brand><ThingsLogo />ThingsBoard</Brand>
    <MenuScroll>
      <Menu>
        {menu.map((group, g) => (
          <MenuGroup key={g}>
            {group.map((m) => (
              <MenuRow key={m.t} $sub={m.sub} $active={m.active}>
                {m.i}
                <MenuText>{m.t}</MenuText>
                {m.open !== undefined && <Toggle $open={m.open}><Chevron open={m.open} /></Toggle>}
              </MenuRow>
            ))}
          </MenuGroup>
        ))}
      </Menu>
      <ScrollThumb />
    </MenuScroll>
  </Sidebar>
);

const Dashboard = () => (
  <Main>
    <Header>
      <Crumb $parent><MdDashboard size={48} /><CrumbText>Dashboards</CrumbText></Crumb>
      <CrumbSeparator>&gt;</CrumbSeparator>
      <Crumb><MdDashboard size={48} /><CrumbText>LED_STATE_TEST</CrumbText></Crumb>
      <HeaderActions>
        <HeaderIcon><MdFullscreen size={48} /></HeaderIcon>
        <HeaderIcon><MdNotifications size={48} /><AlertBadge>7</AlertBadge></HeaderIcon>
        <Account>
          <MdAccountCircle size={72} />
          <AccountText>
            <UserEmail>tenant@thingsboard.org</UserEmail>
            <UserRole>Tenant administrator</UserRole>
          </AccountText>
        </Account>
        <MdMoreVert size={48} />
      </HeaderActions>
    </Header>
    <DashBar>
      <TextButton><MdLayers size={36} />States</TextButton>
      <TextButton $l={57}><MdiIcon d={viewCompact} />Layouts</TextButton>
      <BarActions>
        <OutlineButton $w={252}><MdAdd size={36} />Add widget</OutlineButton>
        <IconTools>
          <MdSchedule size={48} />
          <MdSettings size={48} />
          <MdDevicesOther size={48} />
          <MdFilterList size={48} />
          <MdHistory size={48} />
        </IconTools>
        <WhiteRule />
        <TextButton $l={41}><MdClose size={36} />Cancel</TextButton>
        <OutlineButton $l={41} $w={166}><MdCheck size={36} />Save</OutlineButton>
      </BarActions>
    </DashBar>
    <TitleBlock>
      <TitleHint>Title*</TitleHint>
      <Title>LED_STATE_TEST</Title>
    </TitleBlock>
    <Board>
      <AddWidgetCard><MdAdd size={192} />Add new widget</AddWidgetCard>
    </Board>
    <Footer>Powered by <VersionLink>Thingsboard v.3.6.3</VersionLink></Footer>
  </Main>
);

export default function App() {
  return (
    <Screen>
      <Global />
      <DesktopBar />
      <Workspace>
        <Launcher />
        <Browser>
          <BrowserFrame />
          <Page>
            <SideMenu />
            <Dashboard />
          </Page>
        </Browser>
      </Workspace>
      <StepNumber><Digit>3</Digit></StepNumber>
      <Arrow width="190" height="150" viewBox="1960 1150 190 150" fill="#ff0000">
        <polygon points="1991.700,1162 2108.800,1234.300 2118.800,1218.700 2131.900,1274 2076,1287 2086.900,1269.700 1970.300,1196.700" />
      </Arrow>
      <Highlight />
    </Screen>
  );
}
